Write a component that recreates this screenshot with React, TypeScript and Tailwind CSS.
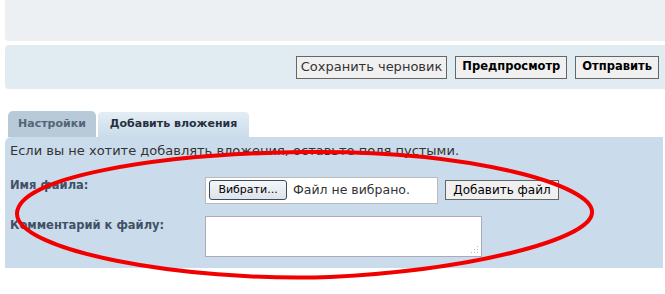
export default function App() {
  return (
    <div className="relative h-[294px] w-[665px] overflow-hidden bg-white font-['DejaVu_Sans',sans-serif] text-[12px] text-[#333]">
      {/* top panel */}
      <div className="ml-[5px] h-[41px] rounded-bl-[4px] bg-[#ECF0F3]" />

      {/* buttons bar */}
      <div className="ml-[5px] mt-[4px] flex h-[44px] items-center justify-end gap-[8px] rounded-l-[4px] bg-[#E1EBF2] pr-[6px]">
        <button className="h-[23px] border border-[#666] bg-[#F0F0F0] px-[4px] font-['DejaVu_Sans',sans-serif] text-[13px] text-[#333]">
          Сохранить черновик
        </button>
        <button className="h-[23px] border border-[#666] bg-[#F0F0F0] px-[6px] text-[11.5px] font-bold text-black">
          Предпросмотр
        </button>
        <button className="h-[23px] border border-[#666] bg-[#F0F0F0] px-[6px] text-[11.5px] font-bold text-black">
          Отправить
        </button>
      </div>

      {/* tabs */}
      <div className="ml-[8px] mt-[22px] flex h-[26px] items-end gap-[1px]">
        <div className="flex h-[26px] w-[88px] items-center justify-center rounded-t-[5px] bg-[#B8CAD8] text-[11px] font-bold text-[#536477]">
          Настройки
        </div>
        <div className="flex h-[26px] w-[153px] items-center justify-center rounded-t-[5px] border border-b-0 border-white bg-gradient-to-b from-[#E4EDF4] to-[#CADCEB] text-[11px] font-bold text-[#28313F]">
          Добавить вложения
        </div>
      </div>

      {/* attachments panel */}
      <div className="ml-[5px] mr-[2px] h-[131px] rounded-tl-[6px] bg-[#CADCEB] px-[5px] pt-[4px]">
        <p className="text-[13px] text-[#333]">Если вы не хотите добавлять вложения, оставьте поля пустыми.</p>

        <div className="mt-[16px] flex items-start">
          <div className="w-[195px] pt-[0px] text-[11.5px] font-bold text-[#425067]">Имя файла:</div>
          <div className="flex h-[27px] w-[233px] items-center gap-[6px] border border-[#BBB] bg-white px-[3px]">
            <span className="flex h-[20px] w-[78px] items-center justify-center rounded-[3px] border border-[#3D4A5C] bg-gradient-to-b from-[#F4F6F9] to-[#DDE3EB] text-[11px] text-black">
              Вибрати...
            </span>
            <span className="text-[12.5px] text-[#333]">Файл не вибрано.</span>
          </div>
          <button className="ml-[7px] mt-[3px] h-[20px] w-[114px] border border-[#666] bg-[#F0F0F0] text-[12px] text-black">
            Добавить файл
          </button>
        </div>

        <div className="mt-[12px] flex items-start">
          <div className="w-[195px] pt-[1px] text-[11.5px] font-bold text-[#425067]">Комментарий к файлу:</div>
          <div className="relative h-[41px] w-[277px] border border-[#AAB] bg-white">
            <svg className="absolute bottom-[2px] right-[2px]" width="9" height="9" viewBox="0 0 9 9">
              <g fill="#BBB">
                <rect x="7" y="1" width="1" height="1" />
                <rect x="4" y="4" width="1" height="1" />
                <rect x="7" y="4" width="1" height="1" />
                <rect x="1" y="7" width="1" height="1" />
                <rect x="4" y="7" width="1" height="1" />
                <rect x="7" y="7" width="1" height="1" />
              </g>
            </svg>
          </div>
        </div>
      </div>

      {/* hand-drawn red ellipse */}
      <svg className="pointer-events-none absolute left-0 top-0" width="665" height="294" viewBox="0 0 665 294">
        <path
          d="M305 152 C 470 150, 595 185, 592 213 C 590 240, 470 270, 330 277 C 180 282, 15 250, 17 213 C 19 178, 150 154, 305 152 Z"
          fill="none"
          stroke="#F20000"
          strokeWidth="4"
        />
      </svg>
    </div>
  );
}
